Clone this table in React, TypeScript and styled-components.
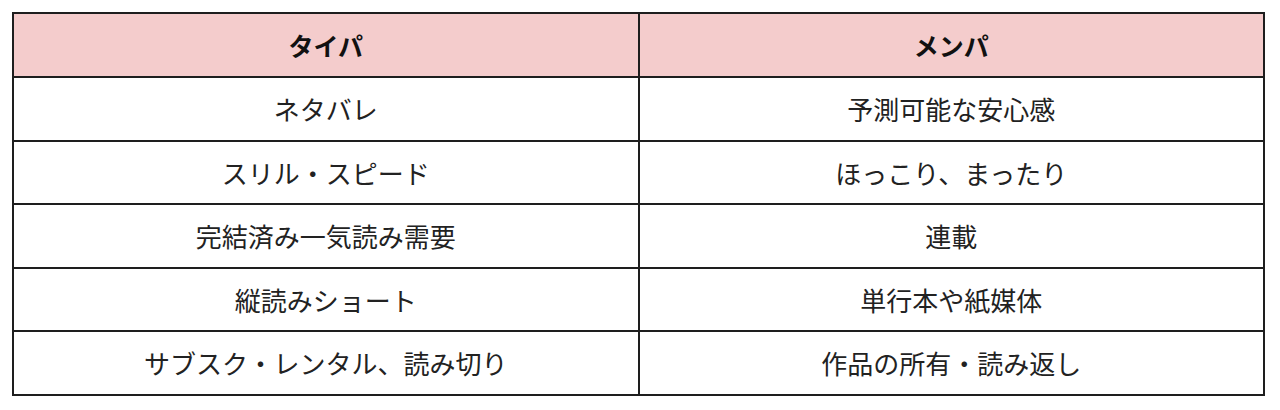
import React from "react";
import styled, { createGlobalStyle } from "styled-components";

const Global = createGlobalStyle`
  html, body { margin: 0; padding: 0; background: #ffffff; }
  body { font-family: "Noto Sans CJK JP", "Noto Sans", sans-serif; }
`;

const Page = styled.div`
  padding: 12px 15px 0 12px;
`;

const Table = styled.table`
  width: 1253px;
  border-collapse: collapse;
  table-layout: fixed;
  border: 2px solid #1e1e1e;
`;

const Th = styled.th`
  background: #f4cccc;
  height: 62px;
  border: 2px solid #1e1e1e;
  font-size: 25px;
  font-weight: 700;
  color: #111;
  text-align: center;
  padding: 0;
`;

const Td = styled.td`
  height: 61.5px;
  border: 2px solid #1e1e1e;
  font-size: 26px;
  font-weight: 400;
  color: #222;
  text-align: center;
  padding: 0;
`;

const rows: [string, string][] = [
  ["ネタバレ", "予測可能な安心感"],
  ["スリル・スピード", "ほっこり、まったり"],
  ["完結済み一気読み需要", "連載"],
  ["縦読みショート", "単行本や紙媒体"],
  ["サブスク・レンタル、読み切り", "作品の所有・読み返し"],
];

export default function App() {
  return (
    <>
      <Global />
      <Page>
        <Table>
          <thead>
            <tr>
              <Th>タイパ</Th>
              <Th>メンパ</Th>
            </tr>
          </thead>
          <tbody>
            {rows.map(([a, b]) => (
              <tr key={a}>
                <Td>{a}</Td>
                <Td>{b}</Td>
              </tr>
            ))}
          </tbody>
        </Table>
      </Page>
    </>
  );
}
